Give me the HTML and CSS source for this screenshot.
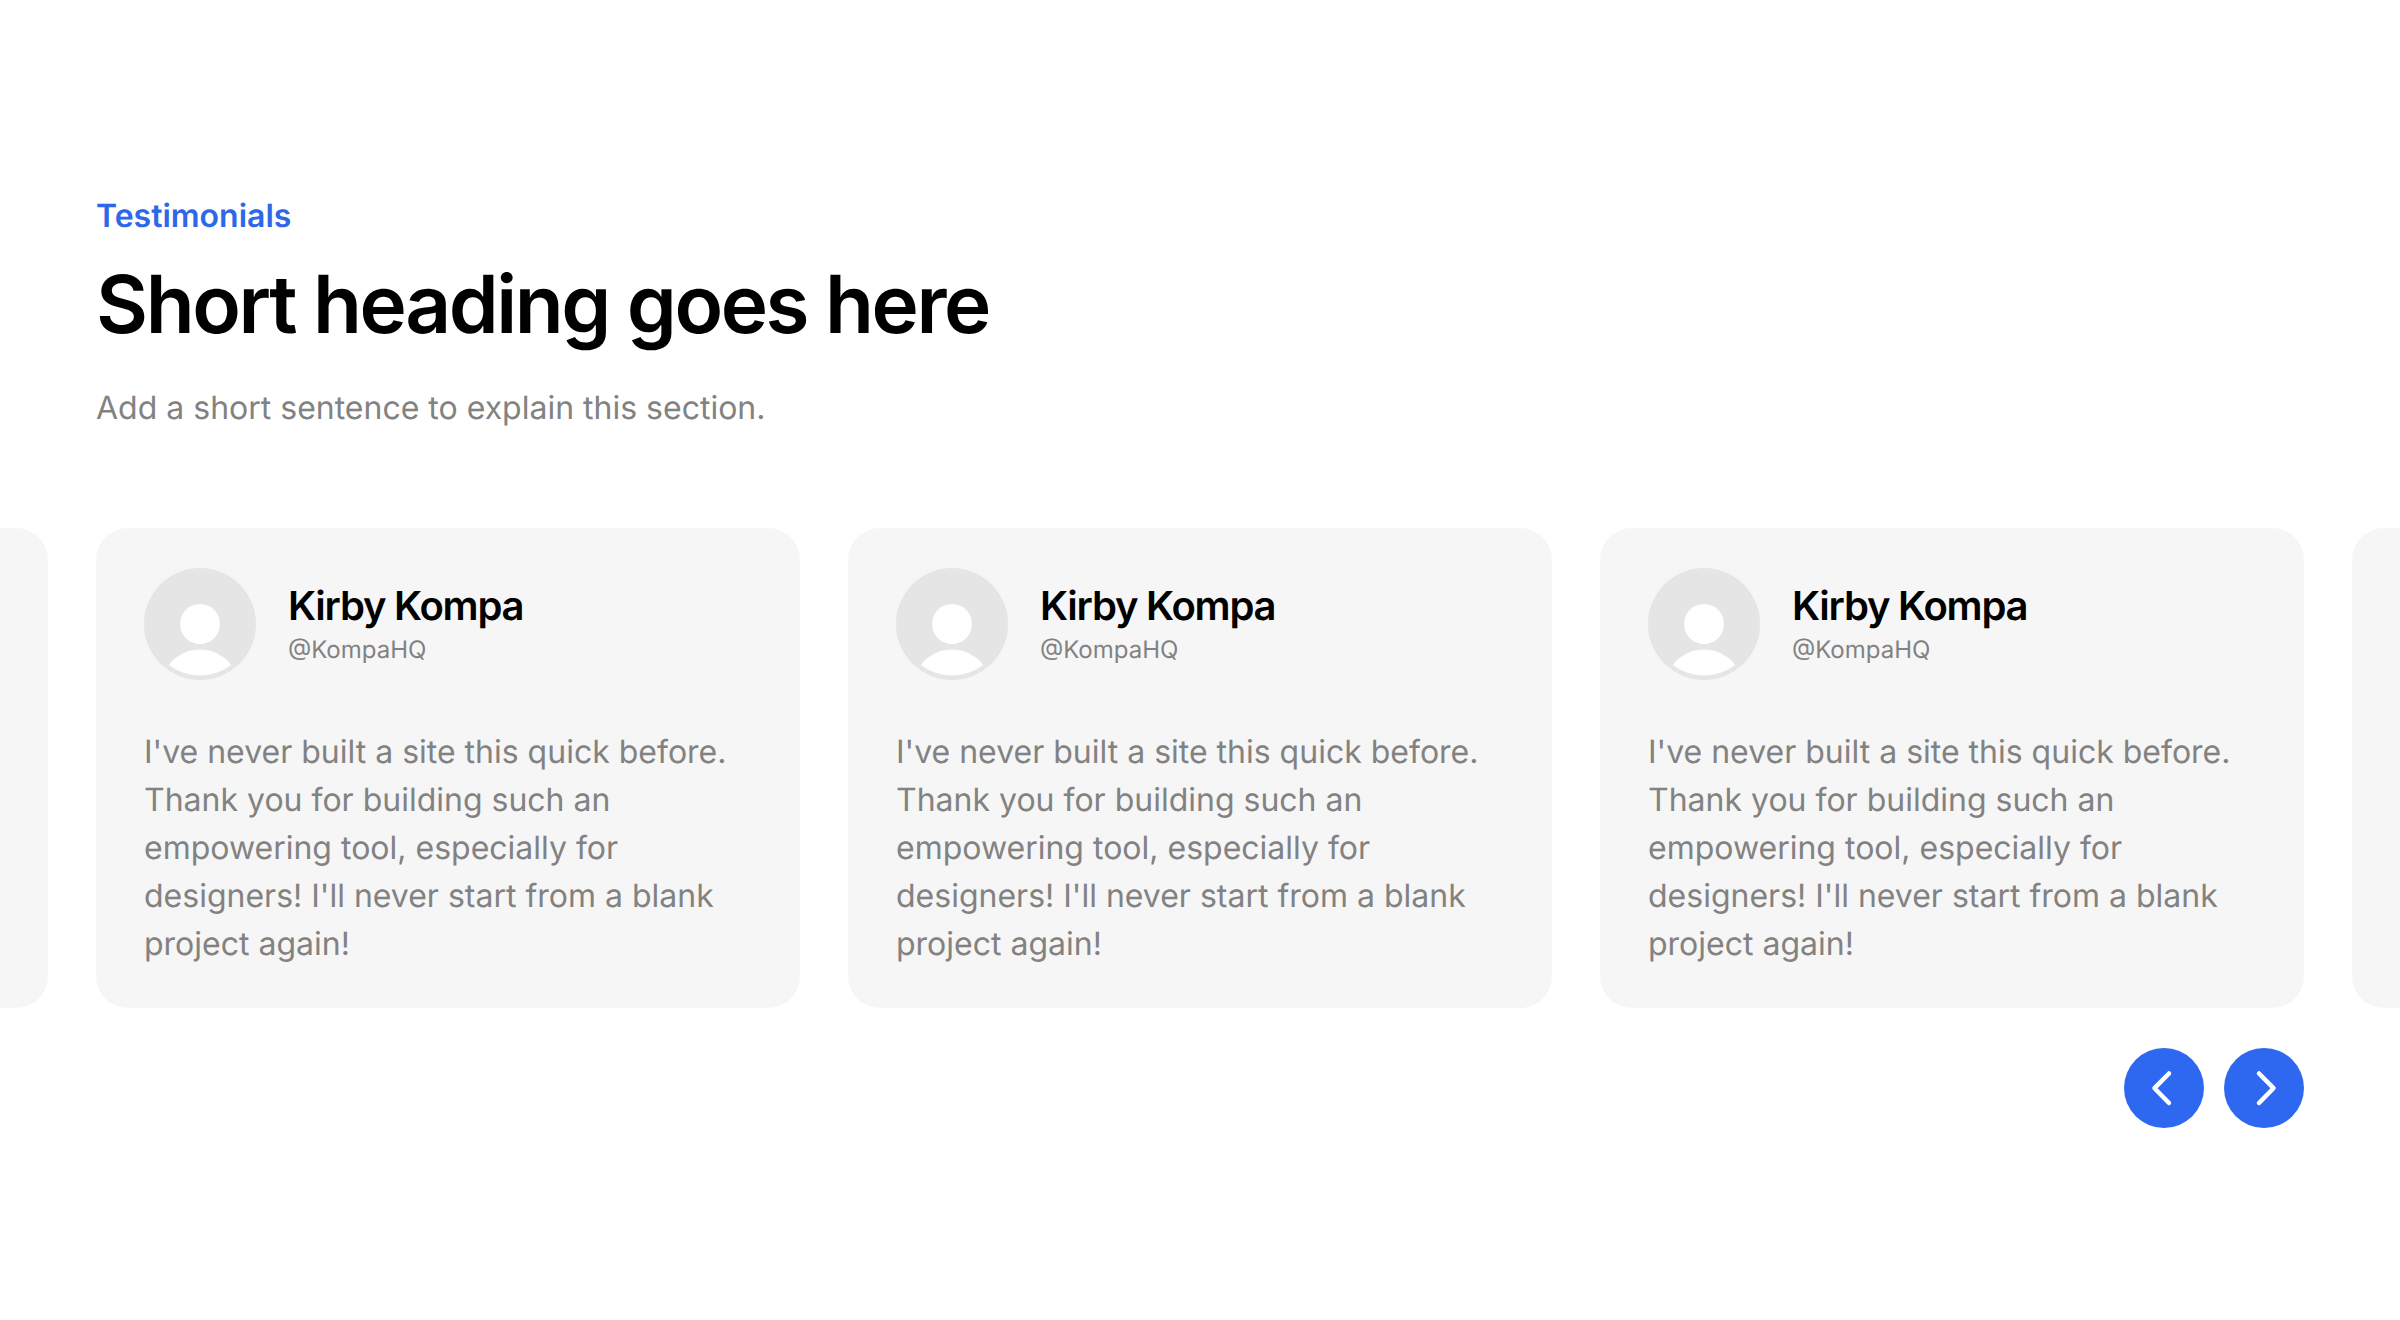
FILE: index.html
```html
<!DOCTYPE html>
<html lang="en">
<head>
<meta charset="utf-8">
<title>Testimonials</title>
<link rel="stylesheet" href="styles.css">
</head>
<body>
<section class="section">
  <header class="intro">
    <p class="eyebrow">Testimonials</p>
    <h1 class="heading">Short heading goes here</h1>
    <p class="lead">Add a short sentence to explain this section.</p>
  </header>
  <div class="track">
    <article class="card"></article>
    <article class="card">
      <div class="person">
        <svg class="avatar" viewBox="0 0 112 112"><circle cx="56" cy="56" r="56" fill="#e5e5e5"/><circle cx="56" cy="56" r="20" fill="#fff"/><path d="M24.700 97A39.500 39.500 0 0 1 87.300 97A52 52 0 0 1 24.700 97Z" fill="#fff"/></svg>
        <div class="who"><h2 class="name">Kirby Kompa</h2><p class="handle">@KompaHQ</p></div>
      </div>
      <p class="quote">I've never built a site this quick before. Thank you for building such an empowering tool, especially for designers! I'll never start from a blank project again!</p>
    </article>
    <article class="card">
      <div class="person">
        <svg class="avatar" viewBox="0 0 112 112"><circle cx="56" cy="56" r="56" fill="#e5e5e5"/><circle cx="56" cy="56" r="20" fill="#fff"/><path d="M24.700 97A39.500 39.500 0 0 1 87.300 97A52 52 0 0 1 24.700 97Z" fill="#fff"/></svg>
        <div class="who"><h2 class="name">Kirby Kompa</h2><p class="handle">@KompaHQ</p></div>
      </div>
      <p class="quote">I've never built a site this quick before. Thank you for building such an empowering tool, especially for designers! I'll never start from a blank project again!</p>
    </article>
    <article class="card">
      <div class="person">
        <svg class="avatar" viewBox="0 0 112 112"><circle cx="56" cy="56" r="56" fill="#e5e5e5"/><circle cx="56" cy="56" r="20" fill="#fff"/><path d="M24.700 97A39.500 39.500 0 0 1 87.300 97A52 52 0 0 1 24.700 97Z" fill="#fff"/></svg>
        <div class="who"><h2 class="name">Kirby Kompa</h2><p class="handle">@KompaHQ</p></div>
      </div>
      <p class="quote">I've never built a site this quick before. Thank you for building such an empowering tool, especially for designers! I'll never start from a blank project again!</p>
    </article>
    <article class="card"></article>
  </div>
  <div class="controls">
    <button class="arrow" aria-label="Previous"><svg viewBox="0 0 80 80" class="chev"><path d="M45 25.500L30.500 40.200L45 55" /></svg></button>
    <button class="arrow" aria-label="Next"><svg viewBox="0 0 80 80" class="chev"><path d="M35 25.500L49.500 40.200L35 55" /></svg></button>
  </div>
</section>
</body>
</html>
```
FILE: styles.css
```css
* { box-sizing: border-box; }
html, body { margin: 0; padding: 0; background: #fff; }
body { font-family: Inter, "Liberation Sans", sans-serif; text-rendering: geometricPrecision; overflow: hidden; height: 1320px; }
.section { padding: 192px 96px 0; }
.intro { display: flex; flex-direction: column; }
.eyebrow { margin: 0; font-size: 32px; line-height: 48px; font-weight: 600; color: #2e68e8; }
.heading { margin: 17px 0 0; font-size: 80px; line-height: 96px; font-weight: 600; letter-spacing: -2.4px; color: #000; }
.lead { margin: 31px 0 0; font-size: 32px; line-height: 48px; color: #828282; }
.track { display: flex; gap: 48px; margin: 96px 0 0 -752px; align-items: stretch; }
.card { flex: 0 0 704px; height: 480px; padding: 40px 48px; background: #f6f6f6; border-radius: 32px; }
.person { display: flex; align-items: center; gap: 32px; }
.avatar { width: 112px; height: 112px; flex: none; display: block; }
.who { margin-top: -5px; }
.name { margin: 0; font-size: 40px; line-height: 56px; font-weight: 600; letter-spacing: -1.2px; color: #000; }
.handle { margin: 0; font-size: 24px; line-height: 32px; color: #828282; }
.quote { margin: 48px 0 0; font-size: 32px; line-height: 48px; color: #828282; }
.controls { display: flex; justify-content: flex-end; gap: 20px; margin-top: 40px; }
.arrow { width: 80px; height: 80px; padding: 0; border: 0; border-radius: 50%; background: #2e68f0; }
.chev { display: block; width: 80px; height: 80px; fill: none; stroke: #fff; stroke-width: 4.500; stroke-linecap: round; stroke-linejoin: round; }
```
